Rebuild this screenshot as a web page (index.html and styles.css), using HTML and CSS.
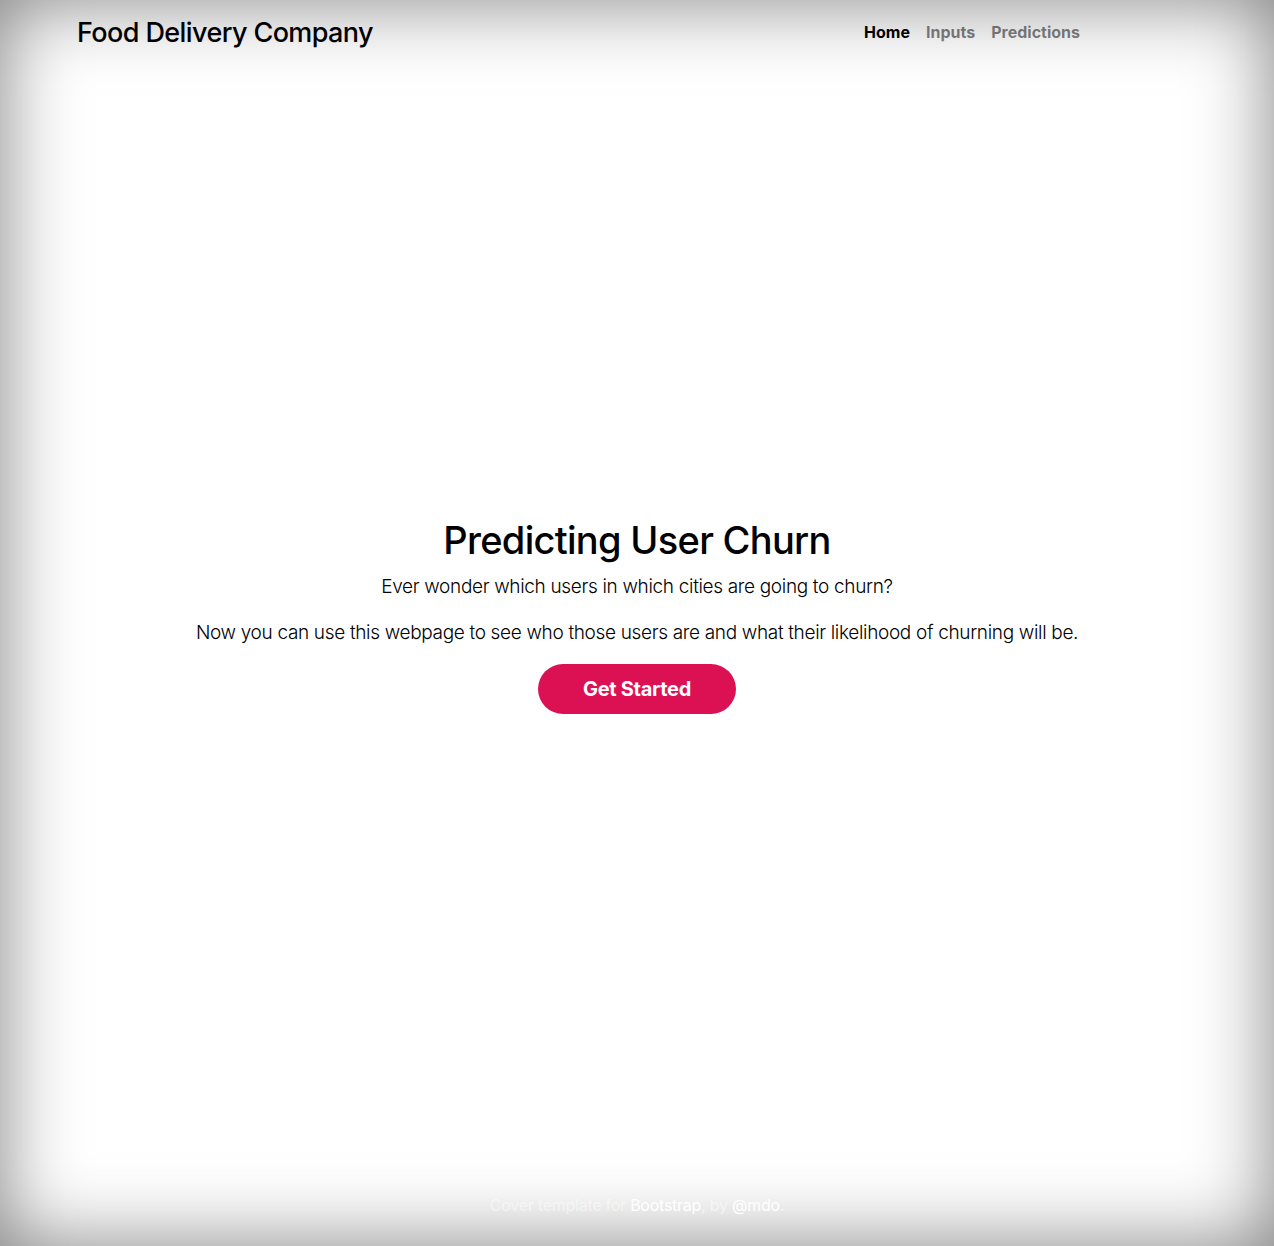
FILE: index.html
```html
<!DOCTYPE html>
<html lang="en">
<head>
<meta charset="utf-8">
<title>Food Delivery Company</title>
<link rel="stylesheet" href="styles.css">
</head>
<body>
<div class="cover">
  <header class="masthead">
    <h3 class="brand">Food Delivery Company</h3>
    <nav class="nav">
      <a class="nav-link active" href="#">Home</a>
      <a class="nav-link" href="#">Inputs</a>
      <a class="nav-link" href="#">Predictions</a>
    </nav>
  </header>
  <main class="hero">
    <h1 class="title">Predicting User Churn</h1>
    <p class="lead">Ever wonder which users in which cities are going to churn?</p>
    <p class="lead lead-last">Now you can use this webpage to see who those users are and what their likelihood of churning will be.</p>
    <a class="btn" href="#">Get Started</a>
  </main>
  <footer class="mastfoot">
    <p>Cover template for <a href="#">Bootstrap</a>, by <a href="#">@mdo</a>.</p>
  </footer>
</div>
</body>
</html>
```
FILE: styles.css
```css
html, body { height: 100%; }
body {
  margin: 0;
  font-family: Inter, "Noto Sans", sans-serif;
  color: #000;
  background: #fff;
  box-shadow: inset 0 0 5rem rgba(0,0,0,.5);
}
.cover {
  display: flex;
  flex-direction: column;
  min-height: 100%;
  box-sizing: border-box;
  padding: 17px 0 31px;
}
.masthead {
  display: flex;
  justify-content: space-between;
  align-items: center;
  padding: 0 194px 0 77px;
}
.brand {
  margin: 0;
  font-size: 27px;
  font-weight: 500;
  letter-spacing: -0.6px;
  line-height: 1.2;
}
.nav { display: flex; gap: 16px; padding-bottom: 2px; }
.nav-link {
  font-size: 16px;
  font-weight: 700;
  color: rgba(0,0,0,.5);
  text-decoration: none;
}
.nav-link.active { color: #000; }
.hero {
  margin: auto 0;
  padding-bottom: 12px;
  display: flex;
  flex-direction: column;
  align-items: center;
  text-align: center;
}
.title {
  margin: 0 0 9px;
  font-size: 38px;
  font-weight: 500;
  letter-spacing: -0.7px;
  line-height: 1.2;
}
.lead {
  margin: 0 0 18px;
  font-size: 19px;
  font-weight: 300;
  letter-spacing: -0.33px;
  line-height: 1.5;
}
.lead-last { margin-bottom: 16px; }
.btn {
  display: inline-block;
  width: 198px;
  height: 50px;
  line-height: 50px;
  border-radius: 25px;
  background: #dc1154;
  color: #fff;
  font-size: 20px;
  font-weight: 700;
  letter-spacing: -0.3px;
  text-decoration: none;
}
.mastfoot {
  text-align: center;
  color: rgba(255,255,255,.5);
  font-size: 16px;
  letter-spacing: -0.25px;
}
.mastfoot p { margin: 0; }
.mastfoot a { color: #fff; text-decoration: none; }
```
